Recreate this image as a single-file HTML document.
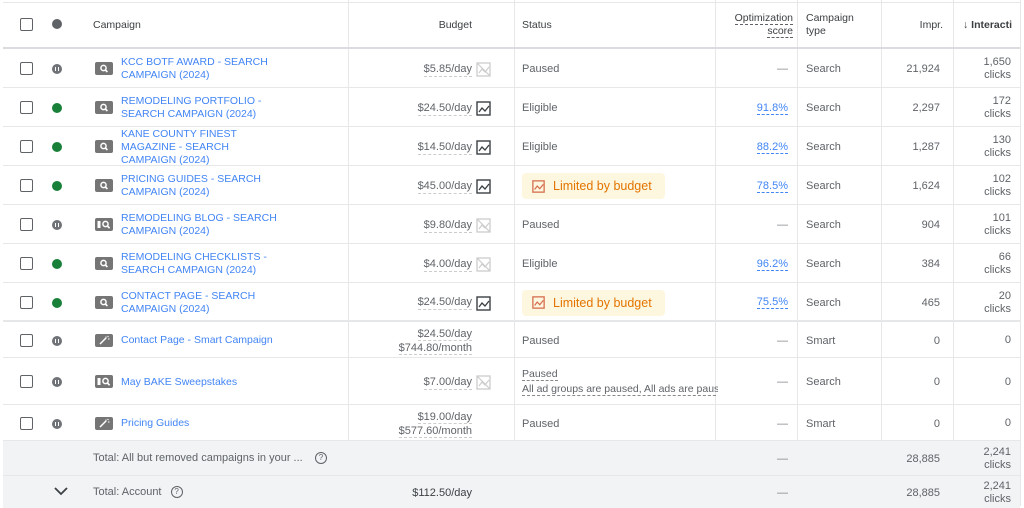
<!DOCTYPE html>
<html><head><meta charset="utf-8"><style>
*{box-sizing:border-box;margin:0;padding:0}
body{width:1024px;height:506px;overflow:hidden;background:#fff;font-family:"Liberation Sans",Arial,sans-serif;font-size:11px;color:#3c4043;position:relative}
.r{position:absolute;left:3px;width:1017px;border-bottom:1px solid #e6e7e9}
.c{position:absolute;top:0;height:100%;display:flex;align-items:center}
.vl{position:absolute;top:0;bottom:0;width:1px;background:#e6e7e9}
.cb{left:17px;width:13px;height:13px;border:1.6px solid #5f6368;border-radius:2px;position:absolute;top:50%;margin-top:-6px}
.dot{position:absolute;left:49px;top:50%;margin-top:-4px;width:10px;height:10px;border-radius:50%}
.g{background:#188038}
.p{background:#6f7378}
.p:after{content:"";position:absolute;left:3px;top:3px;height:4px;border-left:1px solid #fff;border-right:1px solid #fff;width:4px;box-sizing:border-box}
.ic{position:absolute;left:92px;top:50%;margin-top:-6px}
.name{left:118px;color:#4285f4;line-height:13px;padding-top:2px;white-space:nowrap;font-size:10.5px}
.bud{right:548px;text-align:right;color:#5f6368;line-height:14px;justify-content:flex-end;padding-top:2px}
.bud span{border-bottom:1px dashed #ccc}
.bi{position:absolute;left:473px;top:50%;margin-top:-6px}
.st{left:519px;color:#5f6368;padding-top:2px}
.opt{right:232px;color:#4285f4;justify-content:flex-end;padding-top:2px}
.opt span{border-bottom:1px dashed #4285f4}
.ty{left:803px;color:#5f6368;padding-top:2px}
.im{right:80px;justify-content:flex-end;color:#5f6368;padding-top:2px}
.in{right:9px;justify-content:flex-end;text-align:right;color:#5f6368;line-height:13px;padding-top:2px}
.gray{color:#80868b}
.lim{background:#fef7e0;color:#e37400;font-size:12.5px;padding:5px 10px;border-radius:4px;display:flex;align-items:center;gap:8px;height:26px;width:143px}
.hd{color:#3c4043;font-size:10.5px}
</style></head><body>
<svg width="0" height="0" style="position:absolute"><defs>
<symbol id="sr" viewBox="0 0 18 13"><rect width="18" height="13" rx="2" fill="#757575"/><circle cx="8.5" cy="6" r="2.6" fill="none" stroke="#fff" stroke-width="1.5"/><path d="M10.4 8l2 2" stroke="#fff" stroke-width="1.6"/></symbol>
<symbol id="bl" viewBox="0 0 18 13"><rect width="18" height="13" rx="2" fill="#757575"/><rect x="2.5" y="3" width="3" height="7" fill="#fff"/><circle cx="10.5" cy="6" r="2.6" fill="none" stroke="#fff" stroke-width="1.5"/><path d="M12.4 8l2.2 2.2" stroke="#fff" stroke-width="1.6"/></symbol>
<symbol id="sm" viewBox="0 0 18 13"><rect width="18" height="13" rx="2" fill="#757575"/><path d="M5 10l6-6" stroke="#fff" stroke-width="1.5"/><path d="M11 2.5v2M12.5 2l1 1M13 5h1.5" stroke="#fff" stroke-width="1"/></symbol>
</defs></svg>
<div class="vl" style="left:348px"></div>
<div class="vl" style="left:514px"></div>
<div class="vl" style="left:715px"></div>
<div class="vl" style="left:797px"></div>
<div class="vl" style="left:881px"></div>
<div class="vl" style="left:953px"></div>
<div class="vl" style="left:1020px"></div>
<div style="position:absolute;left:3px;top:2px;width:1017px;height:1px;background:#e6e7e9"></div>

<div class="r" style="top:3px;height:46px;border-bottom:2px solid #dadce0">
 <div class="cb" style="margin-top:-7px"></div>
 <div class="dot" style="background:#5f6368;margin-top:-6px"></div>
 <div class="c hd" style="left:90px">Campaign</div>
 <div class="c hd" style="right:548px">Budget</div>
 <div class="c hd" style="left:519px">Status</div>
 <div class="c hd" style="right:227px;text-align:right;line-height:13px"><div><span style="border-bottom:1px dashed #5f6368">Optimization</span><br><span style="border-bottom:1px dashed #5f6368">score</span></div></div>
 <div class="c hd" style="left:803px;line-height:13px">Campaign<br>type</div>
 <div class="c hd" style="right:77px">Impr.</div>
 <div class="c hd" style="left:960px;font-weight:bold;white-space:nowrap;overflow:hidden;width:57px">↓&nbsp;Interacti</div>
</div>

<div class="r" style="top:49px;height:39px"><div class="cb"></div><div class="dot p"></div><svg class="ic" width="18" height="13"><use href="#sr"/></svg><div class="c name">KCC BOTF AWARD - SEARCH<br>CAMPAIGN (2024)</div><div class="c bud"><span>$5.85/day</span></div><svg class="bi" width="15" height="15" viewBox="0 0 15 15"><rect x="1" y="1" width="13" height="13" fill="none" stroke="#ccc" stroke-width="1.3"/><path d="M1 1L14 14M3 11l3-4 3 3 4-5" fill="none" stroke="#ccc" stroke-width="1.2"/></svg><div class="c st">Paused</div><div class="c opt gray">—</div><div class="c ty">Search</div><div class="c im">21,924</div><div class="c in">1,650<br>clicks</div></div>

<div class="r" style="top:88px;height:39px"><div class="cb"></div><div class="dot g"></div><svg class="ic" width="18" height="13"><use href="#sr"/></svg><div class="c name">REMODELING PORTFOLIO -<br>SEARCH CAMPAIGN (2024)</div><div class="c bud"><span>$24.50/day</span></div><svg class="bi" width="15" height="15" viewBox="0 0 15 15"><rect x="1" y="1" width="13" height="13" fill="none" stroke="#3c4043" stroke-width="1.4"/><path d="M3 11l3-4 3 3 4-5" fill="none" stroke="#3c4043" stroke-width="1.3"/></svg><div class="c st">Eligible</div><div class="c opt"><span>91.8%</span></div><div class="c ty">Search</div><div class="c im">2,297</div><div class="c in">172<br>clicks</div></div>

<div class="r" style="top:127px;height:39px"><div class="cb"></div><div class="dot g"></div><svg class="ic" width="18" height="13"><use href="#sr"/></svg><div class="c name">KANE COUNTY FINEST<br>MAGAZINE - SEARCH<br>CAMPAIGN (2024)</div><div class="c bud"><span>$14.50/day</span></div><svg class="bi" width="15" height="15" viewBox="0 0 15 15"><rect x="1" y="1" width="13" height="13" fill="none" stroke="#3c4043" stroke-width="1.4"/><path d="M3 11l3-4 3 3 4-5" fill="none" stroke="#3c4043" stroke-width="1.3"/></svg><div class="c st">Eligible</div><div class="c opt"><span>88.2%</span></div><div class="c ty">Search</div><div class="c im">1,287</div><div class="c in">130<br>clicks</div></div>

<div class="r" style="top:166px;height:39px"><div class="cb"></div><div class="dot g"></div><svg class="ic" width="18" height="13"><use href="#sr"/></svg><div class="c name">PRICING GUIDES - SEARCH<br>CAMPAIGN (2024)</div><div class="c bud"><span>$45.00/day</span></div><svg class="bi" width="15" height="15" viewBox="0 0 15 15"><rect x="1" y="1" width="13" height="13" fill="none" stroke="#3c4043" stroke-width="1.4"/><path d="M3 11l3-4 3 3 4-5" fill="none" stroke="#3c4043" stroke-width="1.3"/></svg><div class="c st"><div class="lim"><svg width="13" height="13" viewBox="0 0 15 15"><rect x="1" y="1" width="13" height="13" fill="none" stroke="#d56e4f" stroke-width="1.5"/><path d="M3 11l3-4 3 3 4-5" fill="none" stroke="#d56e4f" stroke-width="1.4"/></svg>Limited by budget</div></div><div class="c opt"><span>78.5%</span></div><div class="c ty">Search</div><div class="c im">1,624</div><div class="c in">102<br>clicks</div></div>

<div class="r" style="top:205px;height:39px"><div class="cb"></div><div class="dot p"></div><svg class="ic" width="18" height="13"><use href="#bl"/></svg><div class="c name">REMODELING BLOG - SEARCH<br>CAMPAIGN (2024)</div><div class="c bud"><span>$9.80/day</span></div><svg class="bi" width="15" height="15" viewBox="0 0 15 15"><rect x="1" y="1" width="13" height="13" fill="none" stroke="#ccc" stroke-width="1.3"/><path d="M1 1L14 14M3 11l3-4 3 3 4-5" fill="none" stroke="#ccc" stroke-width="1.2"/></svg><div class="c st">Paused</div><div class="c opt gray">—</div><div class="c ty">Search</div><div class="c im">904</div><div class="c in">101<br>clicks</div></div>

<div class="r" style="top:244px;height:39px"><div class="cb"></div><div class="dot g"></div><svg class="ic" width="18" height="13"><use href="#sr"/></svg><div class="c name">REMODELING CHECKLISTS -<br>SEARCH CAMPAIGN (2024)</div><div class="c bud"><span>$4.00/day</span></div><svg class="bi" width="15" height="15" viewBox="0 0 15 15"><rect x="1" y="1" width="13" height="13" fill="none" stroke="#ccc" stroke-width="1.3"/><path d="M1 1L14 14M3 11l3-4 3 3 4-5" fill="none" stroke="#ccc" stroke-width="1.2"/></svg><div class="c st">Eligible</div><div class="c opt"><span>96.2%</span></div><div class="c ty">Search</div><div class="c im">384</div><div class="c in">66<br>clicks</div></div>

<div class="r" style="top:283px;height:39px;border-bottom:2px solid #e6e7e9"><div class="cb"></div><div class="dot g"></div><svg class="ic" width="18" height="13"><use href="#sr"/></svg><div class="c name">CONTACT PAGE - SEARCH<br>CAMPAIGN (2024)</div><div class="c bud"><span>$24.50/day</span></div><svg class="bi" width="15" height="15" viewBox="0 0 15 15"><rect x="1" y="1" width="13" height="13" fill="none" stroke="#3c4043" stroke-width="1.4"/><path d="M3 11l3-4 3 3 4-5" fill="none" stroke="#3c4043" stroke-width="1.3"/></svg><div class="c st"><div class="lim"><svg width="13" height="13" viewBox="0 0 15 15"><rect x="1" y="1" width="13" height="13" fill="none" stroke="#d56e4f" stroke-width="1.5"/><path d="M3 11l3-4 3 3 4-5" fill="none" stroke="#d56e4f" stroke-width="1.4"/></svg>Limited by budget</div></div><div class="c opt"><span>75.5%</span></div><div class="c ty">Search</div><div class="c im">465</div><div class="c in">20<br>clicks</div></div>

<div class="r" style="top:322px;height:36px"><div class="cb"></div><div class="dot p"></div><svg class="ic" width="18" height="13"><use href="#sm"/></svg><div class="c name">Contact Page - Smart Campaign</div><div class="c bud"><div><span>$24.50/day</span><br><span>$744.80/month</span></div></div><div class="c st">Paused</div><div class="c opt gray">—</div><div class="c ty">Smart</div><div class="c im">0</div><div class="c in">0</div></div>

<div class="r" style="top:358px;height:47px"><div class="cb"></div><div class="dot p"></div><svg class="ic" width="18" height="13"><use href="#bl"/></svg><div class="c name">May BAKE Sweepstakes</div><div class="c bud"><span>$7.00/day</span></div><svg class="bi" width="15" height="15" viewBox="0 0 15 15"><rect x="1" y="1" width="13" height="13" fill="none" stroke="#ccc" stroke-width="1.3"/><path d="M1 1L14 14M3 11l3-4 3 3 4-5" fill="none" stroke="#ccc" stroke-width="1.2"/></svg><div class="c st" style="width:196px;overflow:hidden;white-space:nowrap;line-height:15px;font-size:10.5px"><div><span style="border-bottom:1px dashed #888">Paused</span><br><span style="border-bottom:1px dashed #888">All ad groups are paused, All ads are paused</span></div></div><div class="c opt gray">—</div><div class="c ty">Search</div><div class="c im">0</div><div class="c in">0</div></div>

<div class="r" style="top:405px;height:36px"><div class="cb"></div><div class="dot p"></div><svg class="ic" width="18" height="13"><use href="#sm"/></svg><div class="c name">Pricing Guides</div><div class="c bud"><div><span>$19.00/day</span><br><span>$577.60/month</span></div></div><div class="c st">Paused</div><div class="c opt gray">—</div><div class="c ty">Smart</div><div class="c im">0</div><div class="c in">0</div></div>

<div class="r" style="top:441px;height:35px;background:#f1f3f4"><div class="c" style="left:90px;color:#5f6368">Total: All but removed campaigns in your ...&nbsp;&nbsp;&nbsp;&nbsp;<span style="display:inline-block;width:12px;height:12px;border:1.3px solid #5f6368;border-radius:50%;font-size:8px;text-align:center;line-height:10px">?</span></div><div class="c opt gray">—</div><div class="c im">28,885</div><div class="c in">2,241<br>clicks</div></div>

<div class="r" style="top:476px;height:32px;background:#f1f3f4;border-bottom:none"><svg style="position:absolute;left:51px;top:11px" width="14" height="9" viewBox="0 0 14 9"><path d="M1 1l6 6 6-6" fill="none" stroke="#3c4043" stroke-width="1.8"/></svg><div class="c" style="left:90px;color:#5f6368">Total: Account&nbsp;&nbsp;&nbsp;<span style="display:inline-block;width:12px;height:12px;border:1.3px solid #5f6368;border-radius:50%;font-size:8px;text-align:center;line-height:10px">?</span></div><div class="c bud" style="color:#3c4043">$112.50/day</div><div class="c opt gray">—</div><div class="c im">28,885</div><div class="c in">2,241<br>clicks</div></div>
</body></html>
